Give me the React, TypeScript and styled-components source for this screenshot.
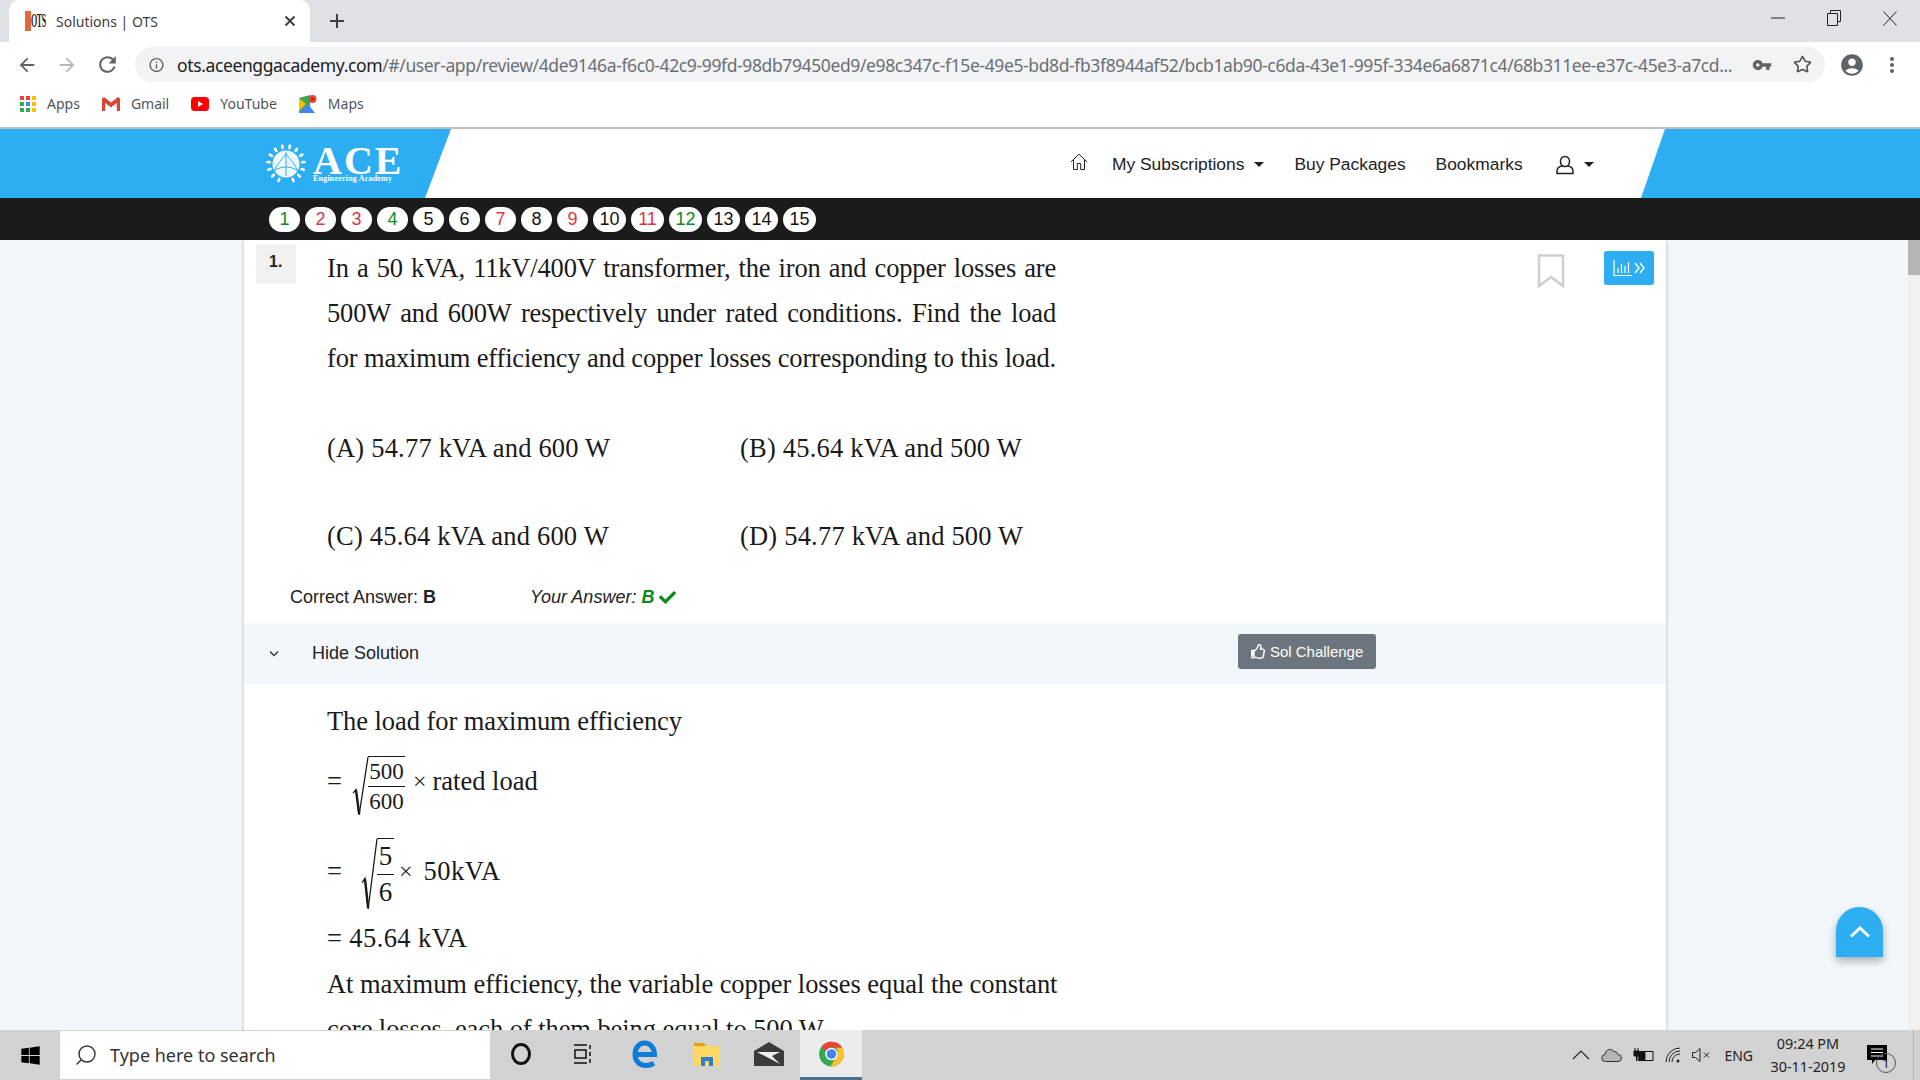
import { createGlobalStyle } from "styled-components";
import styled from "styled-components";
import { FaCheck, FaRegThumbsUp, FaWindows } from "react-icons/fa";
import {
  MdAccountCircle,
  MdArrowBack,
  MdArrowForward,
  MdInfoOutline,
  MdMoreVert,
  MdRefresh,
  MdVpnKey,
} from "react-icons/md";
import { Search, Star } from "lucide-react";

const pills = [
  { n: 1, c: "#0a8a2a" },
  { n: 2, c: "#dc3545" },
  { n: 3, c: "#dc3545" },
  { n: 4, c: "#0a8a2a" },
  { n: 5, c: "#111" },
  { n: 6, c: "#111" },
  { n: 7, c: "#dc3545" },
  { n: 8, c: "#111" },
  { n: 9, c: "#dc3545" },
  { n: 10, c: "#111" },
  { n: 11, c: "#dc3545" },
  { n: 12, c: "#0a8a2a" },
  { n: 13, c: "#111" },
  { n: 14, c: "#111" },
  { n: 15, c: "#111" },
];

function Emblem() {
  const leaves = Array.from({ length: 14 }, (_, i) => (i + 1) * 24 - 180);
  return (
    <svg width="42" height="40" viewBox="0 0 42 40">
      {leaves.map((a) => (
        <ellipse
          key={a}
          cx="21"
          cy="2.5"
          rx="1.4"
          ry="2.6"
          fill="#fff"
          transform={`rotate(${a} 21 20)`}
        />
      ))}
      <circle cx="21" cy="20" r="13.5" fill="#fff" opacity="0.92" />
      <path
        d="M21 8v24M21 10C16 16 12 21 9 27M21 10c5 6 9 11 12 17M9 27c4-3 8-4 12-4s8 1 12 4"
        stroke="#2eaef2"
        strokeWidth="1"
        fill="none"
      />
    </svg>
  );
}

function AppsGrid() {
  const colors = ["#ea4335", "#ea4335", "#fbbc05", "#34a853", "#4285f4", "#fbbc05", "#34a853", "#34a853", "#fbbc05"];
  return (
    <svg width="16" height="16" viewBox="0 0 16 16">
      {colors.map((c, i) => (
        <rect key={i} x={(i % 3) * 6} y={Math.floor(i / 3) * 6} width="4" height="4" fill={c} />
      ))}
    </svg>
  );
}

function ChromeLogo() {
  return (
    <svg width="27" height="30" viewBox="0 0 24 24">
      <circle cx="12" cy="12" r="11" fill="#34a853" />
      <path d="M12 1a11 11 0 0 1 9.53 5.5H12a5.5 5.5 0 0 0-5.2 3.9L3.2 5.4A11 11 0 0 1 12 1z" fill="#ea4335" />
      <path d="M21.53 6.5A11 11 0 0 1 11 23l5.2-8.2a5.5 5.5 0 0 0-.4-8.3z" fill="#fbc02d" />
      <circle cx="12" cy="12" r="5.6" fill="#fff" />
      <circle cx="12" cy="12" r="4.3" fill="#4285f4" />
    </svg>
  );
}

function Radical({ w, h }: { w: number; h: number }) {
  return (
    <svg width={w} height={h} viewBox={`0 0 ${w} ${h}`}>
      <path
        d={`M1 ${h * 0.62} L4 ${h * 0.56} L${w * 0.42} ${h - 1} L${w - 1} 1`}
        stroke="#1a1a1a"
        strokeWidth="1.3"
        fill="none"
      />
      <path d={`M4 ${h * 0.57} L${w * 0.42} ${h - 2}`} stroke="#1a1a1a" strokeWidth="2.4" fill="none" />
    </svg>
  );
}

export default function App() {
  return (
    <Page>
      <GlobalStyle />
      <TabStrip>
        <Tab>
          <Favicon>
            <FavBlock />
            <FavText>OTS</FavText>
          </Favicon>
          <TabTitle>Solutions | OTS</TabTitle>
          <TabClose>
            <svg width="12" height="12" viewBox="0 0 12 12">
              <path d="M1.5 1.5l9 9M10.5 1.5l-9 9" stroke="#3c4043" strokeWidth="2" />
            </svg>
          </TabClose>
        </Tab>
        <NewTab>
          <svg width="16" height="16" viewBox="0 0 16 16">
            <path d="M8 1v14M1 8h14" stroke="#3c4043" strokeWidth="2" />
          </svg>
        </NewTab>
        <WindowControls>
          <WinButton>
            <svg width="14" height="14" viewBox="0 0 14 14">
              <path d="M0 7h14" stroke="#222" />
            </svg>
          </WinButton>
          <WinButton>
            <svg width="14" height="16" viewBox="0 0 14 16">
              <path d="M.5 3.5h10v12H.5zM3.5 3.5v-3h10v11h-3" stroke="#222" fill="none" />
            </svg>
          </WinButton>
          <WinButton>
            <svg width="14" height="15" viewBox="0 0 14 15">
              <path d="M.5.5l13 14M13.5.5l-13 14" stroke="#222" />
            </svg>
          </WinButton>
        </WindowControls>
      </TabStrip>

      <Toolbar>
        <NavIcon>
          <MdArrowBack size={22} color="#5f6368" />
        </NavIcon>
        <NavIcon>
          <MdArrowForward size={22} color="#b4b7bb" />
        </NavIcon>
        <NavIcon>
          <MdRefresh size={25} color="#5f6368" />
        </NavIcon>
        <Omnibox>
          <MdInfoOutline size={18} color="#5f6368" />
          <Url>
            <b>ots.aceenggacademy.com</b>
            /#/user-app/review/4de9146a-f6c0-42c9-99fd-98db79450ed9/e98c347c-f15e-49e5-bd8d-fb3f8944af52/bcb1ab90-c6da-43e1-995f-334e6a6871c4/68b311ee-e37c-45e3-a7cd...
          </Url>
          <OmniIcons>
            <MdVpnKey size={20} color="#5f6368" />
            <Star size={19} color="#4b4e52" strokeWidth={2} />
          </OmniIcons>
        </Omnibox>
        <ProfileIcons>
          <MdAccountCircle size={26} color="#5f6368" />
          <MdMoreVert size={24} color="#5f6368" />
        </ProfileIcons>
      </Toolbar>

      <Bookmarks>
        <Bookmark>
          <AppsGrid />
          <span>Apps</span>
        </Bookmark>
        <Bookmark>
          <svg width="18" height="14" viewBox="0 0 18 14">
            <path d="M0 1.5V14h3.2V6L9 10.5 14.8 6v8H18V1.5L16 0 9 5.5 2 0z" fill="#d6473a" />
          </svg>
          <span>Gmail</span>
        </Bookmark>
        <Bookmark>
          <svg width="18" height="14" viewBox="0 0 18 14">
            <rect width="18" height="14" rx="3.5" fill="#f00" />
            <path d="M7 4l5 3-5 3z" fill="#fff" />
          </svg>
          <span>YouTube</span>
        </Bookmark>
        <Bookmark>
          <svg width="18" height="18" viewBox="0 0 18 18">
            <path d="M0 3l11-3v18H0z" fill="#34a853" />
            <path d="M0 18l9-9 7 9z" fill="#4285f4" />
            <path d="M0 3l7 6-7 7z" fill="#fbbc05" />
            <circle cx="13.5" cy="4" r="4" fill="#ea4335" />
            <circle cx="13.5" cy="4" r="1.4" fill="#a52714" />
          </svg>
          <span>Maps</span>
        </Bookmark>
      </Bookmarks>
      <Rule />

      <SiteHeader>
        <BrandSide>
          <Emblem />
          <Brand>
            <BrandName>ACE</BrandName>
            <BrandSub>Engineering Academy</BrandSub>
          </Brand>
        </BrandSide>
        <Nav>
          <NavHome>
            <svg width="18" height="18" viewBox="0 0 18 18">
              <path
                d="M.8 9L9 1.2 17.2 9M3.5 7v9.5h3.8v-6h3.4v6h3.8V7"
                stroke="#222"
                strokeWidth="1"
                fill="none"
              />
            </svg>
          </NavHome>
          <NavLink>
            My Subscriptions
            <Caret />
          </NavLink>
          <NavLink>Buy Packages</NavLink>
          <NavLink>Bookmarks</NavLink>
          <NavUser>
            <svg width="18" height="20" viewBox="0 0 18 20">
              <path
                d="M9 1.5a4.5 4.5 0 0 1 4.5 5c0 2.5-1.5 5-4.5 5s-4.5-2.5-4.5-5a4.5 4.5 0 0 1 4.5-5zM6 11c-3 .6-5 2-5 5v2.5h16V16c0-3-2-4.400-5-5"
                stroke="#222"
                strokeWidth="1.5"
                fill="none"
              />
            </svg>
            <Caret />
          </NavUser>
        </Nav>
        <EndSide />
      </SiteHeader>

      <PillBar>
        {pills.map((p) => (
          <Pill key={p.n} $color={p.c} $wide={p.n > 9}>
            {p.n}
          </Pill>
        ))}
      </PillBar>

      <Main>
        <Panel>
          <QuestionHead>
            <QNumber>1.</QNumber>
            <QBody>
              <QLine>In a 50 kVA, 11kV/400V transformer, the iron and copper losses are</QLine>
              <QLine>500W and 600W respectively under rated conditions. Find the load</QLine>
              <QLine>for maximum efficiency and copper losses corresponding to this load.</QLine>
              <Options>
                <span>(A) 54.77 kVA and 600 W</span>
                <span>(B) 45.64 kVA and 500 W</span>
                <span>(C) 45.64 kVA and 600 W</span>
                <span>(D) 54.77 kVA and 500 W</span>
              </Options>
            </QBody>
            <QTools>
              <BookmarkMark width="28" height="34" viewBox="0 0 28 34">
                <path d="M2 1.500h24V32L14 23 2 32z" stroke="#cfcfcf" strokeWidth="2.500" fill="none" />
              </BookmarkMark>
              <StatsButton>
                <svg width="20" height="18" viewBox="0 0 20 18">
                  <path
                    d="M1 1v15.500h18M5 14V9M8.500 14V5M12 14V7M15.500 14V3"
                    stroke="#fff"
                    strokeWidth="1.200"
                    fill="none"
                  />
                </svg>
                <svg width="11" height="12" viewBox="0 0 11 12">
                  <path d="M1 1l4 5-4 5M6 1l4 5-4 5" stroke="#fff" strokeWidth="1.400" fill="none" />
                </svg>
              </StatsButton>
            </QTools>
          </QuestionHead>

          <AnswerRow>
            <AnswerCell>
              Correct Answer: <b>B</b>
            </AnswerCell>
            <YourAnswer>
              Your Answer:{" "}
              <Correct>
                B <FaCheck size={17} />
              </Correct>
            </YourAnswer>
          </AnswerRow>

          <SolutionBar>
            <svg width="12" height="8" viewBox="0 0 12 8">
              <path d="M2 1.500l4 4 4-4" stroke="#333" strokeWidth="1.300" fill="none" />
            </svg>
            <SolutionLabel>Hide Solution</SolutionLabel>
            <ChallengeButton>
              <FaRegThumbsUp size={15} /> Sol Challenge
            </ChallengeButton>
          </SolutionBar>

          <Solution>
            <SolLine $h={44} $top={15}>
              The load for maximum efficiency
            </SolLine>
            <SolLine $h={76}>
              <Eq>=</Eq>
              <Root $left={8} $top={10}>
                <Radical w={17} h={60} />
                <Frac $w={37}>
                  <span>500</span>
                  <span>600</span>
                </Frac>
              </Root>
              <Times $left={8}>×</Times>
              <Tail $left={6}>rated load</Tail>
            </SolLine>
            <SolLine $h={104}>
              <Eq>=</Eq>
              <Root $left={17} $top={5}>
                <Radical w={17} h={72} />
                <Frac $w={17} $large>
                  <span>5</span>
                  <span>6</span>
                </Frac>
              </Root>
              <Times $left={5}>×</Times>
              <Tail $left={11} $spacing={0.5}>
                50kVA
              </Tail>
            </SolLine>
            <SolLine $h={30} $spacing={0.4}>
              = 45.64 kVA
            </SolLine>
            <SolLine $h={62}>At maximum efficiency, the variable copper losses equal the constant</SolLine>
            <SolLine $h={28}>core losses, each of them being equal to 500 W</SolLine>
          </Solution>
        </Panel>
        <ScrollTrack>
          <ScrollThumb />
        </ScrollTrack>
        <ToTop>
          <svg width="22" height="14" viewBox="0 0 22 14">
            <path d="M2 11.500l9-8.500 9 8.500" stroke="#fff" strokeWidth="2.800" fill="none" />
          </svg>
        </ToTop>
      </Main>

      <Taskbar>
        <StartButton>
          <FaWindows size={21} />
        </StartButton>
        <SearchBox>
          <SearchGlass size={24} strokeWidth={1.400} />
          <span>Type here to search</span>
        </SearchBox>
        <TaskIcon>
          <CortanaRing />
        </TaskIcon>
        <TaskIcon>
          <svg width="20" height="20" viewBox="0 0 20 20">
            <path d="M1 1h13M1 19h13M2 6h11v8H2z M17 1v4M17 8v4M17 15v4" stroke="#111" strokeWidth="1.500" fill="none" />
          </svg>
        </TaskIcon>
        <TaskIcon>
          <svg width="26" height="28" viewBox="0 0 26 28">
            <path
              d="M5 14.500h17.500C22.500 8 18.500 3 12.500 3 7 3 3 8 3 14.500 3 21 7.500 25.500 14 25.500c3 0 5.500-.8 8-2.200"
              stroke="#0f7bd8"
              strokeWidth="5"
              fill="none"
            />
          </svg>
        </TaskIcon>
        <TaskIcon>
          <svg width="28" height="26" viewBox="0 0 28 26">
            <path d="M1 2h10l2 3H1z" fill="#e5a100" />
            <path d="M1 5h26v20H1z" fill="#ffd864" />
            <path d="M8 25v-9h12v9h-4v-5h-4v5z" fill="#2a7ed3" />
          </svg>
        </TaskIcon>
        <TaskIcon>
          <svg width="30" height="24" viewBox="0 0 30 24">
            <path d="M0 9L15 0l15 9v15H0z" fill="#3b3b3b" />
            <path d="M0 9l16 6 9 9H0zM30 9l-7 3 7 8z" fill="#3b3b3b" />
            <path d="M3 10h23l-8 4 8 8z" fill="#eee" />
          </svg>
        </TaskIcon>
        <TaskIcon $active>
          <ChromeLogo />
        </TaskIcon>
        <Tray>
          <svg width="18" height="10" viewBox="0 0 18 10">
            <path d="M1 9l8-8 8 8" stroke="#222" strokeWidth="1.100" fill="none" />
          </svg>
          <svg width="21" height="14" viewBox="0 0 21 14">
            <path
              d="M4.500 13.500a3.500 3.500 0 0 1-.5-7 5 5 0 0 1 9-3 4 4 0 0 1 4 3 3.500 3.500 0 0 1 0 7z"
              fill="#b5b5b5"
              stroke="#333"
            />
          </svg>
          <svg width="21" height="14" viewBox="0 0 21 14">
            <path d="M5 3.500h15v9H5z" stroke="#111" fill="none" />
            <path d="M6 4.500h6v7H6zM1 3h5v5H1zM2 0v3M5 0v3M3.500 8v5" fill="#111" stroke="#111" />
          </svg>
          <svg width="16" height="16" viewBox="0 0 16 16">
            <path d="M1 15A14 14 0 0 1 15 1M4 15A11 11 0 0 1 15 4M7 15a8 8 0 0 1 8-8" stroke="#222" fill="none" />
            <circle cx="13" cy="14" r="1.500" fill="#222" />
          </svg>
          <svg width="19" height="14" viewBox="0 0 19 14">
            <path d="M.5 4.500h3L8 .5v13l-4.500-4h-3zM12 4.500l5 5M17 4.500l-5 5" stroke="#222" fill="none" />
          </svg>
          <TrayLang>ENG</TrayLang>
          <Clock>
            <span>09:24 PM</span>
            <span>30-11-2019</span>
          </Clock>
          <Notify>
            <svg width="20" height="20" viewBox="0 0 20 20">
              <path d="M0 0h20v15H8l-3 4v-4H0z" fill="#000" />
              <path d="M4 4h12M4 7.500h12M4 11h12" stroke="#fff" />
            </svg>
            <NotifyBadge>1</NotifyBadge>
          </Notify>
          <ShowDesktop />
        </Tray>
      </Taskbar>
    </Page>
  );
}

const GlobalStyle = createGlobalStyle`
  html, body {
    margin: 0;
    padding: 0;
    overflow: hidden;
  }
  * {
    box-sizing: border-box;
  }
`;

const Page = styled.div`
  width: 1920px;
  height: 1080px;
  display: flex;
  flex-direction: column;
  overflow: hidden;
  background: #fff;
  font-family: "Liberation Sans", Arial, sans-serif;
`;

const TabStrip = styled.div`
  height: 42px;
  flex: none;
  display: flex;
  align-items: stretch;
  padding-left: 9px;
  background: #dee1e6;
`;
const Tab = styled.div`
  width: 301px;
  display: flex;
  align-items: center;
  padding: 0 14px 0 16px;
  background: #fff;
  border-radius: 10px 10px 0 0;
`;
const Favicon = styled.div`
  width: 21px;
  height: 20px;
  flex: none;
  display: flex;
  align-items: center;
  overflow: hidden;
`;
const FavBlock = styled.span`
  width: 6px;
  height: 20px;
  flex: none;
  background: #e2673a;
`;
const FavText = styled.span`
  flex: none;
  font: bold 19px/20px "Liberation Serif", serif;
  letter-spacing: -1px;
  color: #222;
  transform: scaleX(0.42);
  transform-origin: left center;
`;
const TabTitle = styled.span`
  flex: 1;
  margin-left: 10px;
  font: 14px "Noto Sans", sans-serif;
  color: #3c4043;
`;
const TabClose = styled.span`
  display: flex;
`;
const NewTab = styled.div`
  display: flex;
  align-items: center;
  margin-left: 19px;
`;
const WindowControls = styled.div`
  margin-left: auto;
  display: flex;
  align-items: center;
  padding-right: 2px;
`;
const WinButton = styled.div`
  width: 56px;
  height: 36px;
  margin-bottom: 6px;
  display: flex;
  align-items: center;
  justify-content: center;
`;

const Toolbar = styled.div`
  height: 45px;
  flex: none;
  display: flex;
  align-items: center;
  padding-left: 7px;
`;
const NavIcon = styled.div`
  width: 40px;
  display: flex;
  justify-content: center;
`;
const Omnibox = styled.div`
  width: 1690px;
  height: 35px;
  margin-left: 8px;
  display: flex;
  align-items: center;
  padding: 0 13px;
  background: #f1f3f4;
  border-radius: 18px;
`;
const Url = styled.div`
  width: 1556px;
  margin-left: 12px;
  flex: none;
  white-space: nowrap;
  overflow: hidden;
  font: 17.500px "Noto Sans", sans-serif;
  letter-spacing: -0.380px;
  color: #6b6f74;
  b {
    font-weight: 400;
    color: #202124;
  }
`;
const OmniIcons = styled.div`
  display: flex;
  align-items: center;
  gap: 21px;
  margin-left: 19px;
`;
const ProfileIcons = styled.div`
  display: flex;
  align-items: center;
  gap: 15px;
  margin-left: 14px;
`;

const Bookmarks = styled.div`
  height: 40px;
  flex: none;
  display: flex;
  align-items: center;
  padding: 0 0 7px 20px;
  gap: 22px;
`;
const Bookmark = styled.div`
  display: flex;
  align-items: center;
  gap: 11px;
  font: 14px "Noto Sans", sans-serif;
  color: #50545a;
`;
const Rule = styled.div`
  height: 2px;
  flex: none;
  background: #bdbdbd;
`;

const SiteHeader = styled.header`
  height: 69px;
  flex: none;
  display: flex;
`;
const BrandSide = styled.div`
  width: 451px;
  display: flex;
  align-items: center;
  padding: 0 0 0 265px;
  gap: 6px;
  background: #2eaef2;
  clip-path: polygon(0 0, 100% 0, 425px 100%, 0 100%);
`;
const Brand = styled.div`
  display: flex;
  flex-direction: column;
  padding-top: 2px;
  color: #fff;
`;
const BrandName = styled.span`
  font: bold 40px/30px "Liberation Serif", serif;
  letter-spacing: 2px;
`;
const BrandSub = styled.span`
  margin-top: -2px;
  font: bold 8px/10px "Liberation Serif", serif;
  letter-spacing: 0.200px;
`;
const Nav = styled.nav`
  flex: 1;
  display: flex;
  align-items: center;
  padding: 2px 0 0 619px;
  font-size: 17.400px;
  color: #222;
`;
const NavHome = styled.span`
  display: flex;
  margin: -5px 24px 0 0;
`;
const NavLink = styled.span`
  display: flex;
  align-items: center;
  margin-right: 30px;
`;
const Caret = styled.i`
  width: 0;
  height: 0;
  margin-left: 10px;
  border-top: 5px solid #222;
  border-left: 5px solid transparent;
  border-right: 5px solid transparent;
`;
const NavUser = styled.span`
  display: flex;
  align-items: center;
  margin-left: 3px;
`;
const EndSide = styled.div`
  width: 279px;
  background: #2eaef2;
  clip-path: polygon(24px 0, 100% 0, 100% 100%, 0 100%);
`;

const PillBar = styled.div`
  height: 42px;
  flex: none;
  display: flex;
  align-items: center;
  gap: 5px;
  padding-left: 269px;
  background: #1b1b1b;
`;
const Pill = styled.span<{ $color: string; $wide: boolean }>`
  min-width: ${(p) => (p.$wide ? 33 : 31)}px;
  height: 25px;
  display: flex;
  align-items: center;
  justify-content: center;
  border-radius: 13px;
  background: #fff;
  font-size: 18px;
  color: ${(p) => p.$color};
`;

const Main = styled.main`
  position: relative;
  flex: 1;
  min-height: 0;
  display: flex;
  padding-left: 244px;
  overflow: hidden;
  background: #f2f7fb;
`;
const Panel = styled.section`
  width: 1422px;
  flex: none;
  align-self: flex-start;
  background: #fff;
  box-shadow: 0 0 4px rgba(0, 0, 0, 0.25);
`;
const QuestionHead = styled.div`
  display: flex;
  padding: 5px 12px 0 12px;
`;
const QNumber = styled.div`
  width: 40px;
  height: 38px;
  flex: none;
  padding: 8px 0 0 13px;
  background: #f1f1f1;
  font-size: 16px;
  font-weight: 700;
  color: #222;
`;
const QBody = styled.div`
  width: 729px;
  margin: 1px 0 0 31px;
  font: 26.500px/45px "Liberation Serif", serif;
  color: #1a1a1a;
`;
const QLine = styled.div`
  text-align: justify;
  text-align-last: justify;
  white-space: nowrap;
  letter-spacing: -0.180px;
`;
const Options = styled.div`
  display: grid;
  grid-template-columns: 413px 1fr;
  row-gap: 43px;
  margin-top: 45px;
  white-space: nowrap;
  letter-spacing: 0.200px;
`;
const QTools = styled.div`
  margin-left: auto;
  display: flex;
  align-items: flex-start;
  gap: 39px;
`;
const BookmarkMark = styled.svg`
  margin-top: 9px;
`;
const StatsButton = styled.div`
  width: 50px;
  height: 34px;
  margin-top: 6px;
  display: flex;
  align-items: center;
  justify-content: center;
  gap: 1px;
  border-radius: 3px;
  background: #2eaef2;
`;
const AnswerRow = styled.div`
  height: 64px;
  display: flex;
  align-items: center;
  padding: 12px 0 0 46px;
  font-size: 18px;
  color: #222;
`;
const AnswerCell = styled.span`
  width: 240px;
  b {
    font-weight: 700;
  }
`;
const YourAnswer = styled.span`
  display: flex;
  align-items: center;
  gap: 5px;
  font-style: italic;
`;
const Correct = styled.b`
  display: flex;
  align-items: center;
  gap: 5px;
  color: #0a8a1c;
`;
const SolutionBar = styled.div`
  height: 61px;
  display: flex;
  align-items: center;
  padding-left: 24px;
  background: #f2f7fb;
`;
const SolutionLabel = styled.span`
  margin-left: 32px;
  font-size: 18px;
  color: #222;
`;
const ChallengeButton = styled.div`
  width: 138px;
  height: 35px;
  margin: -4px 0 0 819px;
  display: flex;
  align-items: center;
  justify-content: center;
  gap: 4px;
  border-radius: 3px;
  background: #6c757d;
  font-size: 15px;
  color: #fff;
`;
const Solution = styled.div`
  padding-left: 83px;
  font: 26.500px "Liberation Serif", serif;
  color: #1a1a1a;
`;
const SolLine = styled.div<{ $h: number; $top?: number; $spacing?: number }>`
  height: ${(p) => p.$h}px;
  margin-top: ${(p) => p.$top ?? 0}px;
  display: flex;
  align-items: center;
  white-space: pre;
  letter-spacing: ${(p) => p.$spacing ?? -0.07}px;
`;
const Eq = styled.span`
  width: 17px;
`;
const Root = styled.span<{ $left: number; $top: number }>`
  display: flex;
  align-items: stretch;
  margin-left: ${(p) => p.$left}px;
  margin-top: ${(p) => p.$top}px;
`;
const Frac = styled.span<{ $w: number; $large?: boolean }>`
  width: ${(p) => p.$w}px;
  margin-left: -1px;
  display: flex;
  flex-direction: column;
  align-items: center;
  border-top: 1px solid #1a1a1a;
  font-size: ${(p) => (p.$large ? 27 : 23)}px;
  line-height: ${(p) => (p.$large ? 35 : 29)}px;
  span:first-child {
    width: 100%;
    text-align: center;
    border-bottom: 1px solid #1a1a1a;
  }
`;
const Times = styled.span<{ $left: number }>`
  margin-left: ${(p) => p.$left}px;
  font-size: 24px;
`;
const Tail = styled.span<{ $left: number; $spacing?: number }>`
  margin-left: ${(p) => p.$left}px;
  letter-spacing: ${(p) => p.$spacing ?? 0}px;
`;
const ScrollTrack = styled.div`
  width: 12px;
  margin-left: auto;
  background: #f1f1f1;
`;
const ScrollThumb = styled.div`
  height: 35px;
  background: #b5b5b5;
`;
const ToTop = styled.div`
  position: absolute;
  left: 1836px;
  top: 667px;
  width: 47px;
  height: 50px;
  display: flex;
  align-items: center;
  justify-content: center;
  border-radius: 24px 24px 0 0;
  background: #2eaef2;
  box-shadow: 0 4px 8px rgba(0, 0, 0, 0.3);
`;

const Taskbar = styled.footer`
  height: 50px;
  flex: none;
  display: flex;
  align-items: stretch;
  background: #d2d2d2;
`;
const StartButton = styled.div`
  width: 60px;
  display: flex;
  align-items: center;
  justify-content: center;
  color: #000;
`;
const SearchBox = styled.div`
  width: 430px;
  margin: 1px 0;
  display: flex;
  align-items: center;
  gap: 12px;
  padding-left: 14px;
  background: #fff;
  font: 18px "Noto Sans", sans-serif;
  color: #333;
`;
const SearchGlass = styled(Search)`
  transform: scaleX(-1);
`;
const TaskIcon = styled.div<{ $active?: boolean }>`
  width: 62px;
  display: flex;
  align-items: center;
  justify-content: center;
  background: ${(p) => (p.$active ? "#ececec" : "transparent")};
  border-bottom: 3px solid ${(p) => (p.$active ? "#4d7190" : "transparent")};
`;
const CortanaRing = styled.span`
  width: 20px;
  height: 22px;
  border: 3.500px solid #111;
  border-radius: 50%;
`;
const Tray = styled.div`
  margin-left: auto;
  display: flex;
  align-items: center;
  gap: 11px;
  color: #222;
`;
const TrayLang = styled.span`
  margin-left: 2px;
  font: 14px "Noto Sans", sans-serif;
`;
const Clock = styled.div`
  width: 84px;
  margin-left: 2px;
  display: flex;
  flex-direction: column;
  align-items: center;
  gap: 7px;
  font: 14.400px/16px "Noto Sans", sans-serif;
`;
const Notify = styled.div`
  position: relative;
  width: 30px;
  margin-left: 6px;
  display: flex;
  justify-content: flex-start;
`;
const NotifyBadge = styled.span`
  position: absolute;
  left: 9px;
  top: 8px;
  width: 20px;
  height: 20px;
  display: flex;
  align-items: center;
  justify-content: center;
  border: 1px solid #555;
  border-radius: 50%;
  font: 13px "Noto Sans", sans-serif;
`;
const ShowDesktop = styled.div`
  width: 7px;
  height: 50px;
  margin-left: 5px;
  border-left: 1px solid #b5b5b5;
`;
